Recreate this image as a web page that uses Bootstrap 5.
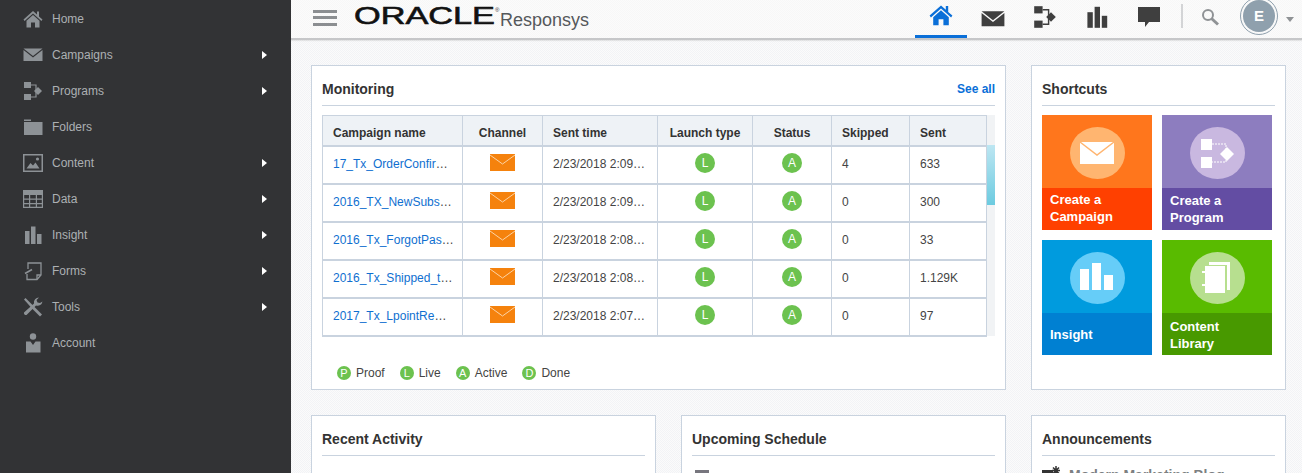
<!DOCTYPE html>
<html lang="en">
  <head>
    <meta charset="UTF-8" />
    <meta name="viewport" content="width=device-width, initial-scale=1.0" />
    <title>Oracle Responsys</title>
    <link href="https://cdn.jsdelivr.net/npm/bootstrap@5.3.0/dist/css/bootstrap.min.css" rel="stylesheet" />
    <style>
      html, body { height: 473px; overflow: hidden; }
      body {
        font-family: "Liberation Sans", Arial, sans-serif;
        font-size: 12px;
        color: #333;
        background: #f6f7f8;
      }
      .side-rail { width: 291px; height: 473px; background: #323335; flex: none; padding-top: 1px; }
      .side-item {
        height: 36px;
        padding-left: 23px;
        padding-right: 24px;
        color: #acb0b3;
        text-decoration: none;
      }
      .side-item svg { width: 20px; height: 20px; color: #8d9296; flex: none; margin-right: 9px; }
      .side-arrow {
        width: 0; height: 0; margin-left: auto;
        border-left: 5px solid #fff;
        border-top: 4.5px solid transparent;
        border-bottom: 4.5px solid transparent;
      }

      .work-area {
        flex: 1;
        min-width: 0;
        background: repeating-conic-gradient(#f2f3f6 0 25%, #fbfbfb 0 50%) 0 0 / 2px 2px;
      }
      .top-bar {
        height: 40px;
        background: repeating-conic-gradient(#f7f7f7 0 25%, #fbfbfb 0 50%) 0 0 / 2px 2px;
        border-bottom: 2px solid #c6c7c9;
        box-shadow: 0 1px 1px rgba(0, 0, 0, 0.08);
        padding-left: 22px;
      }
      .burger { width: 24px; height: 16px; margin-right: 17px; margin-top: -3px; }
      .burger span { display: block; height: 3px; background: #8b8e91; }
      .logo-word { width: 148px; height: 30px; flex: none; }
      .logo-main { font: 400 24px "Liberation Sans", Arial, sans-serif; fill: #111; stroke: #111; stroke-width: 0.6px; }
      .logo-reg { font: 400 6px "Liberation Sans", Arial, sans-serif; fill: #333; }
      .product-name { font-size: 18px; color: #55585b; margin-left: -2px; margin-top: 3px; }
      .top-tools { margin-left: auto; height: 38px; }
      .tool-btn { width: 52px; height: 38px; color: #3f3f3f; }
      .tool-btn svg { width: 24px; height: 24px; margin-top: -5px; }
      .tool-btn svg.tool-low { margin-top: -1px; }
      .tool-active { color: #0a6fd8; border-bottom: 3px solid #0a6fd8; }
      .tool-sep { width: 2px; height: 24px; background: #d3d4d6; margin: 0 18px 6px 6px; }
      .search-icon { width: 18px; height: 18px; margin-right: 21px; margin-bottom: 4px; color: #8f9295; }
      .avatar-ring {
        width: 38px; height: 38px; border-radius: 50%;
        border: 1px solid #8fa0ad;
        padding: 2px;
        margin-top: -6px;
      }
      .avatar-face {
        width: 100%; height: 100%; border-radius: 50%;
        background: #8fa0ad; color: #fff;
        font-size: 15px; font-weight: 700;
      }
      .avatar-caret {
        width: 0; height: 0; margin: 0 8px 0 8px;
        border-top: 5px solid #8f9295;
        border-left: 4.5px solid transparent;
        border-right: 4.5px solid transparent;
      }

      .panel-area { padding: 25px 16px 0 20px; gap: 25px; }
      .panel-row { gap: 25px; }
      .box-panel {
        background: #fff;
        border: 1px solid #c9d3df;
        padding: 0 10px;
      }
      .box-wide { width: 695px; height: 325px; }
      .box-side { width: 255px; }
      .box-recent { width: 345px; height: 100px; }
      .box-upcoming { width: 325px; height: 100px; }
      .box-head {
        height: 40px;
        padding-top: 15px;
        border-bottom: 1px solid #c9d3df;
        font-size: 14px;
        font-weight: 700;
        line-height: 17px;
        color: #333;
      }
      .see-all { font-size: 12px; color: #0a6fd8; text-decoration: none; margin-left: auto; }

      .grid-wrap { margin-top: 9px; height: 223px; position: relative; }
      .mon-grid { width: 664px; table-layout: fixed; border-collapse: collapse; }
      .mon-grid th {
        height: 30px;
        padding: 5px 10px 0;
        background: #eef2f6;
        border: 1px solid #c9d3df;
        border-bottom-width: 2px;
        font-weight: 700;
        color: #333;
      }
      .mon-grid td {
        height: 38px;
        padding: 0 10px 2px;
        border: 1px solid #c9d3df;
        border-bottom-width: 2px;
        white-space: nowrap;
        overflow: hidden;
        text-overflow: ellipsis;
        color: #444;
      }
      .mon-grid td:first-child { padding-right: 8px; }
      .mon-grid td a { color: #0f6fd0; text-decoration: none; }
      .cell-mid { text-align: center; }
      .mon-grid th.cell-mid { padding: 5px 0 0; }
      .w-name { width: 140px; } .w-chan { width: 80px; } .w-time { width: 115px; }
      .w-type { width: 95px; } .w-stat { width: 79px; } .w-skip { width: 78px; } .w-sent { width: 77px; }
      .mail-chip { width: 25px; height: 17px; display: block; margin: -2px auto 0; }
      .state-dot {
        width: 20px; height: 20px; border-radius: 50%;
        background: #6cc24f; color: #fff;
        font-size: 12px; line-height: 20px; text-align: center;
        display: inline-block; margin-top: -2px; vertical-align: middle;
      }
      .scroll-track { position: absolute; left: 665px; top: 0; width: 8px; height: 221px; background: #f1f3f5; }
      .scroll-thumb {
        position: absolute; left: 0; top: 30px; width: 8px; height: 60px;
        background: linear-gradient(#bde6f2, #6ccbe0);
      }
      .legend-line { margin-top: 26px; padding-left: 15px; color: #444; }
      .legend-line .state-dot {
        width: 14px; height: 14px; line-height: 14px; font-size: 11px;
        margin: 0 5px 0 0;
      }
      .legend-item { margin-right: 15px; }

      .tile-grid { display: grid; grid-template-columns: 110px 110px; gap: 10px; margin-top: 9px; padding-bottom: 34px; }
      .tile-box { height: 115px; color: #fff; font-size: 13px; font-weight: 700; line-height: 17px; }
      .tile-top { height: 73px; }
      .tile-foot { height: 42px; padding: 0 8px; }
      .tile-disc { width: 55px; height: 52px; border-radius: 50%; margin-top: 12px; }
      .tile-disc svg { width: 36px; height: 36px; }
      .tone-orange .tile-top { background: #ff761c; } .tone-orange .tile-foot { background: #ff4000; padding-bottom: 2px; } .tone-orange .tile-disc { background: #ffb570; }
      .tone-violet .tile-top { background: #8d7dbf; } .tone-violet .tile-foot { background: #634da3; } .tone-violet .tile-disc { background: #c9b8e0; }
      .tone-blue .tile-top { background: #009bde; } .tone-blue .tile-foot { background: #0080d2; } .tone-blue .tile-disc { background: #66cdf8; }
      .tone-green .tile-top { background: #59bb00; } .tone-green .tile-foot { background: #489900; padding-top: 2px; } .tone-green .tile-disc { background: #b7df8f; }

      .peek-row { margin-top: 9px; height: 20px; color: #7c7f82; font-weight: 700; font-size: 14px; }
      .peek-icon { width: 14px; height: 14px; background: #77767e; margin-left: 3px; margin-top: 14px; }
      .peek-news { width: 22px; height: 18px; color: #333; margin-right: 5px; margin-top: -2px; }
    </style>
  </head>
  <body class="d-flex">
    <svg width="0" height="0" class="position-absolute">
      <defs>
        <symbol id="ic-home" viewBox="0 0 20 20">
          <path d="M10 2 0.5 10.5 1.6 12 10 4.6 18.4 12 19.5 10.500 16 7.400V2.500H14V5.600Z" fill="currentColor"/>
          <path d="M10 6 3.500 11.800V18.500H8V13.500H12V18.500H16.500V11.800Z" fill="currentColor"/>
        </symbol>
        <symbol id="ic-mail" viewBox="0 0 20 20">
          <path d="M0.500 3.500H19.500L10 11Z" fill="currentColor"/>
          <path d="M0.500 5 10 12.500 19.500 5V16H0.500Z" fill="currentColor"/>
        </symbol>
        <symbol id="ic-flow" viewBox="0 0 20 20">
          <rect x="1" y="1" width="7" height="6" fill="currentColor"/>
          <rect x="1" y="13" width="7" height="6" fill="currentColor"/>
          <path d="M8 4H13V16H8" fill="none" stroke="currentColor" stroke-width="1.200"/>
          <path d="M15 6 19 10 15 14 11 10Z" fill="currentColor"/>
        </symbol>
        <symbol id="ic-folder" viewBox="0 0 20 20">
          <path d="M1 2.500H8V4H1Z" fill="currentColor"/>
          <path d="M1 5H19.500V18H1Z" fill="currentColor"/>
        </symbol>
        <symbol id="ic-image" viewBox="0 0 20 20">
          <path fill-rule="evenodd" d="M0 1H20V19H0ZM1.500 2.500V17.500H18.500V2.500Z" fill="currentColor"/>
          <path d="M3.500 15.500 7.500 10 10 12.500 12.500 9.500 16.500 15.500Z" fill="currentColor"/>
          <circle cx="14.500" cy="6" r="1.600" fill="currentColor"/>
        </symbol>
        <symbol id="ic-grid" viewBox="0 0 20 20">
          <path fill-rule="evenodd" d="M0 1H20V19H0ZM1.200 6V9.500H6V6ZM7.200 6V9.500H12.800V6ZM14 6V9.500H18.800V6ZM1.200 10.700V14H6V10.700ZM7.200 10.700V14H12.800V10.700ZM14 10.700V14H18.800V10.700ZM1.200 15.200V17.800H6V15.200ZM7.200 15.200V17.800H12.800V15.200ZM14 15.200V17.800H18.800V15.200Z" fill="currentColor"/>
        </symbol>
        <symbol id="ic-bars" viewBox="0 0 20 20">
          <rect x="2" y="6" width="4.500" height="13" fill="currentColor"/>
          <rect x="8" y="1.500" width="4.500" height="17.500" fill="currentColor"/>
          <rect x="14" y="9" width="4.500" height="10" fill="currentColor"/>
        </symbol>
        <symbol id="ic-form" viewBox="0 0 20 20">
          <path d="M5 8V2H18V14L14 18.500H4V13" fill="none" stroke="currentColor" stroke-width="1.300"/>
          <path d="M14 18.500V14H18" fill="none" stroke="currentColor" stroke-width="1.300"/>
          <path d="M2 12.500 9 8.500" stroke="currentColor" stroke-width="1.500"/>
        </symbol>
        <symbol id="ic-tools" viewBox="0 0 20 20">
          <path d="M1 2.500 2.500 1 11 9.500 19 17.500 17 19.500 9 11.500Z" fill="currentColor"/>
          <path d="M19.500 4.500A5 5 0 0 1 13 8.500L3.500 18A2 2 0 0 1 1 15.500L11 6.500A5 5 0 0 1 16 0.500L13.500 3 14.500 5.500 17 6Z" fill="currentColor"/>
        </symbol>
        <symbol id="ic-user" viewBox="0 0 20 20">
          <circle cx="10" cy="3.500" r="3.200" fill="currentColor"/>
          <path d="M3 8.500H7.500L10 12 12.500 8.500H17.500V19.500H3Z" fill="currentColor"/>
        </symbol>
        <symbol id="ic-chat" viewBox="0 0 24 24">
          <path d="M1 2H23V17H12L8 22V17H1Z" fill="currentColor"/>
        </symbol>
        <symbol id="ic-book" viewBox="0 0 36 36">
          <path d="M10 2H31V30H28V5H10Z" fill="currentColor"/>
          <path d="M6 6H26V33H6V26H3V24H6V13H3V11H6Z" fill="currentColor"/>
        </symbol>
      </defs>
    </svg>

    <nav class="side-rail">
      <a class="side-item d-flex align-items-center" href="#"><svg><use href="#ic-home"/></svg>Home</a>
      <a class="side-item d-flex align-items-center" href="#"><svg><use href="#ic-mail"/></svg>Campaigns<span class="side-arrow"></span></a>
      <a class="side-item d-flex align-items-center" href="#"><svg><use href="#ic-flow"/></svg>Programs<span class="side-arrow"></span></a>
      <a class="side-item d-flex align-items-center" href="#"><svg><use href="#ic-folder"/></svg>Folders</a>
      <a class="side-item d-flex align-items-center" href="#"><svg><use href="#ic-image"/></svg>Content<span class="side-arrow"></span></a>
      <a class="side-item d-flex align-items-center" href="#"><svg><use href="#ic-grid"/></svg>Data<span class="side-arrow"></span></a>
      <a class="side-item d-flex align-items-center" href="#"><svg><use href="#ic-bars"/></svg>Insight<span class="side-arrow"></span></a>
      <a class="side-item d-flex align-items-center" href="#"><svg><use href="#ic-form"/></svg>Forms<span class="side-arrow"></span></a>
      <a class="side-item d-flex align-items-center" href="#"><svg><use href="#ic-tools"/></svg>Tools<span class="side-arrow"></span></a>
      <a class="side-item d-flex align-items-center" href="#"><svg><use href="#ic-user"/></svg>Account</a>
    </nav>

    <div class="work-area">
      <header class="top-bar d-flex align-items-center">
        <div class="burger d-flex flex-column justify-content-between"><span></span><span></span><span></span></div>
        <svg class="logo-word align-self-start" viewBox="0 0 148 30">
          <text class="logo-main" x="0" y="24" textLength="141" lengthAdjust="spacingAndGlyphs">ORACLE</text>
          <text class="logo-reg" x="141" y="12">®</text>
        </svg>
        <span class="product-name">Responsys</span>
        <div class="top-tools d-flex align-items-center">
          <div class="tool-btn tool-active d-flex align-items-center justify-content-center"><svg><use href="#ic-home"/></svg></div>
          <div class="tool-btn d-flex align-items-center justify-content-center"><svg class="tool-low"><use href="#ic-mail"/></svg></div>
          <div class="tool-btn d-flex align-items-center justify-content-center"><svg><use href="#ic-flow"/></svg></div>
          <div class="tool-btn d-flex align-items-center justify-content-center"><svg><use href="#ic-bars"/></svg></div>
          <div class="tool-btn d-flex align-items-center justify-content-center"><svg><use href="#ic-chat"/></svg></div>
          <div class="tool-sep"></div>
          <svg class="search-icon" viewBox="0 0 18 18"><circle cx="7" cy="7" r="5" fill="none" stroke="currentColor" stroke-width="2"/><path d="M10.500 10.500 17 16.500" stroke="currentColor" stroke-width="3"/></svg>
          <div class="avatar-ring"><div class="avatar-face d-flex align-items-center justify-content-center">E</div></div>
          <span class="avatar-caret"></span>
        </div>
      </header>

      <main class="panel-area d-flex flex-column">
        <div class="panel-row d-flex">
          <section class="box-panel box-wide">
            <div class="box-head d-flex">Monitoring<a class="see-all" href="#">See all</a></div>
            <div class="grid-wrap">
              <table class="mon-grid">
                <thead>
                  <tr>
                    <th class="w-name">Campaign name</th>
                    <th class="w-chan cell-mid">Channel</th>
                    <th class="w-time">Sent time</th>
                    <th class="w-type cell-mid">Launch type</th>
                    <th class="w-stat cell-mid">Status</th>
                    <th class="w-skip">Skipped</th>
                    <th class="w-sent">Sent</th>
                  </tr>
                </thead>
                <tbody id="grid-body"></tbody>
              </table>
              <div class="scroll-track"><div class="scroll-thumb"></div></div>
            </div>
            <div class="legend-line d-flex align-items-center">
              <span class="legend-item d-flex align-items-center"><span class="state-dot">P</span>Proof</span>
              <span class="legend-item d-flex align-items-center"><span class="state-dot">L</span>Live</span>
              <span class="legend-item d-flex align-items-center"><span class="state-dot">A</span>Active</span>
              <span class="legend-item d-flex align-items-center"><span class="state-dot">D</span>Done</span>
            </div>
          </section>

          <section class="box-panel box-side">
            <div class="box-head">Shortcuts</div>
            <div class="tile-grid">
              <div class="tile-box tone-orange">
                <div class="tile-top d-flex justify-content-center"><div class="tile-disc d-flex align-items-center justify-content-center">
                  <svg viewBox="0 0 36 36"><rect x="1" y="7" width="34" height="22" fill="#fff"/><path d="M1 7 18 20 35 7" fill="none" stroke="#ffb570" stroke-width="1.500"/></svg>
                </div></div>
                <div class="tile-foot d-flex align-items-center">Create a<br />Campaign</div>
              </div>
              <div class="tile-box tone-violet">
                <div class="tile-top d-flex justify-content-center"><div class="tile-disc d-flex align-items-center justify-content-center">
                  <svg viewBox="0 0 36 36"><rect x="2" y="4" width="11" height="11" fill="#fff"/><rect x="2" y="22" width="11" height="11" fill="#fff"/><path d="M13 9H27V27H13" fill="none" stroke="#fff" stroke-dasharray="2 1"/><path d="M28 12 35 19 28 26 21 19Z" fill="#fff"/></svg>
                </div></div>
                <div class="tile-foot d-flex align-items-center">Create a<br />Program</div>
              </div>
              <div class="tile-box tone-blue">
                <div class="tile-top d-flex justify-content-center"><div class="tile-disc d-flex align-items-center justify-content-center">
                  <svg viewBox="0 0 36 36"><rect x="1" y="9" width="9" height="21" fill="#fff"/><rect x="13" y="3" width="9" height="27" fill="#fff"/><rect x="25" y="15" width="9" height="15" fill="#fff"/></svg>
                </div></div>
                <div class="tile-foot d-flex align-items-center">Insight</div>
              </div>
              <div class="tile-box tone-green">
                <div class="tile-top d-flex justify-content-center"><div class="tile-disc d-flex align-items-center justify-content-center">
                  <svg class="text-white"><use href="#ic-book"/></svg>
                </div></div>
                <div class="tile-foot d-flex align-items-center">Content<br />Library</div>
              </div>
            </div>
          </section>
        </div>

        <div class="panel-row d-flex">
          <section class="box-panel box-recent">
            <div class="box-head">Recent Activity</div>
          </section>
          <section class="box-panel box-upcoming">
            <div class="box-head">Upcoming Schedule</div>
            <div class="peek-icon"></div>
          </section>
          <section class="box-panel box-side">
            <div class="box-head">Announcements</div>
            <div class="peek-row d-flex align-items-center">
              <svg class="peek-news" viewBox="0 0 22 18"><rect x="0" y="5" width="11" height="13" fill="currentColor"/><path d="M14 1V10M10 5.500H18M11 2.500 17 8.500M17 2.500 11 8.500" stroke="currentColor" stroke-width="1.500"/></svg>
              Modern Marketing Blog
            </div>
          </section>
        </div>
      </main>
    </div>

    <script src="https://cdn.jsdelivr.net/npm/bootstrap@5.3.0/dist/js/bootstrap.bundle.min.js"></script>
    <script>
      const rows = [
        ["17_Tx_OrderConfirmation", "2/23/2018 2:09 PM", "4", "633"],
        ["2016_TX_NewSubscriber", "2/23/2018 2:09 PM", "0", "300"],
        ["2016_Tx_ForgotPassword", "2/23/2018 2:08 PM", "0", "33"],
        ["2016_Tx_Shipped_tracking", "2/23/2018 2:08 PM", "0", "1.129K"],
        ["2017_Tx_LpointReward", "2/23/2018 2:07 PM", "0", "97"],
      ];
      const mailChip =
        '<svg class="mail-chip" viewBox="0 0 25 17"><rect width="25" height="17" fill="#f5820d"/><path d="M0 1 12.500 10 25 1" fill="none" stroke="#fbd3a5" stroke-width="1"/></svg>';
      document.getElementById("grid-body").innerHTML = rows
        .map(
          (r) => `<tr>
            <td><a href="#">${r[0]}</a></td>
            <td class="cell-mid">${mailChip}</td>
            <td>${r[1]}</td>
            <td class="cell-mid"><span class="state-dot">L</span></td>
            <td class="cell-mid"><span class="state-dot">A</span></td>
            <td>${r[2]}</td>
            <td>${r[3]}</td>
          </tr>`
        )
        .join("");
    </script>
  </body>
</html>
